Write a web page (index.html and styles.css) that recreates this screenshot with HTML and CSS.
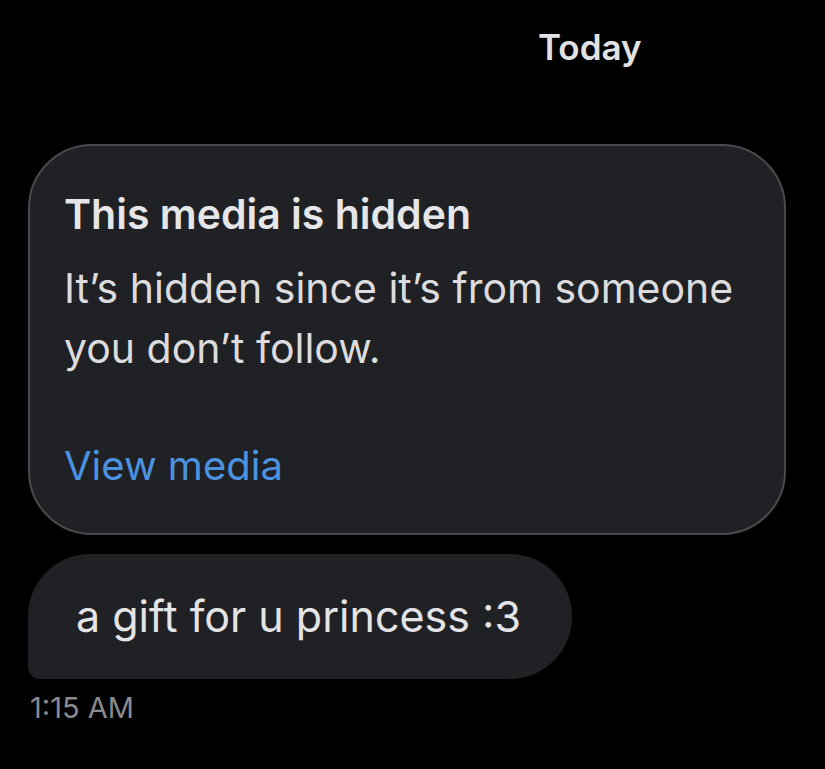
FILE: index.html
```html
<!DOCTYPE html>
<html lang="en">
<head>
    <meta charset="UTF-8"/>
    <link rel="stylesheet" href="styles.css">
</head>
<body>
    <div class="chat">
        <div class="day">Today</div>
        <div class="hidden_card">
            <div class="card_title">This media is hidden</div>
            <div class="card_text">It&#8217;s hidden since it&#8217;s from someone you don&#8217;t follow.</div>
            <div class="card_link">View media</div>
        </div>
        <div class="bubble">a gift for u princess :3</div>
        <div class="time">1:15 AM</div>
    </div>
</body>
</html>
```

FILE: styles.css
```css
html, body {
    margin: 0;
    background: #000;
}

body {
    font-family: Inter, "Noto Sans", sans-serif;
    color: #e4e4e6;
}

.chat {
    padding: 27px 0 0 28px;
    width: 758px;
}

.day {
    padding-left: 510px;
    font-size: 35px;
    font-weight: 600;
    line-height: 40px;
    color: #e2e2e4;
}

.hidden_card {
    margin-top: 77px;
    background: #202124;
    border: 2px solid #4a4a4e;
    border-radius: 64px;
    padding: 44px 34px 43px 34px;
}

.card_title {
    font-size: 41px;
    font-weight: 600;
    line-height: 48px;
    color: #e6e6e8;
}

.card_text {
    margin-top: 20px;
    font-size: 41px;
    line-height: 60px;
    color: #dcdcde;
}

.card_link {
    margin-top: 64px;
    font-size: 40px;
    line-height: 48px;
    color: #4b93e0;
}

.bubble {
    display: inline-block;
    margin-top: 19px;
    background: #202124;
    border-radius: 62px 62px 62px 12px;
    padding: 38px 51px 38px 48px;
    font-size: 43px;
    line-height: 49px;
    color: #e4e4e6;
}

.time {
    margin-top: 11px;
    padding-left: 2px;
    font-size: 29px;
    line-height: 35px;
    color: #8a8a8e;
}
```
